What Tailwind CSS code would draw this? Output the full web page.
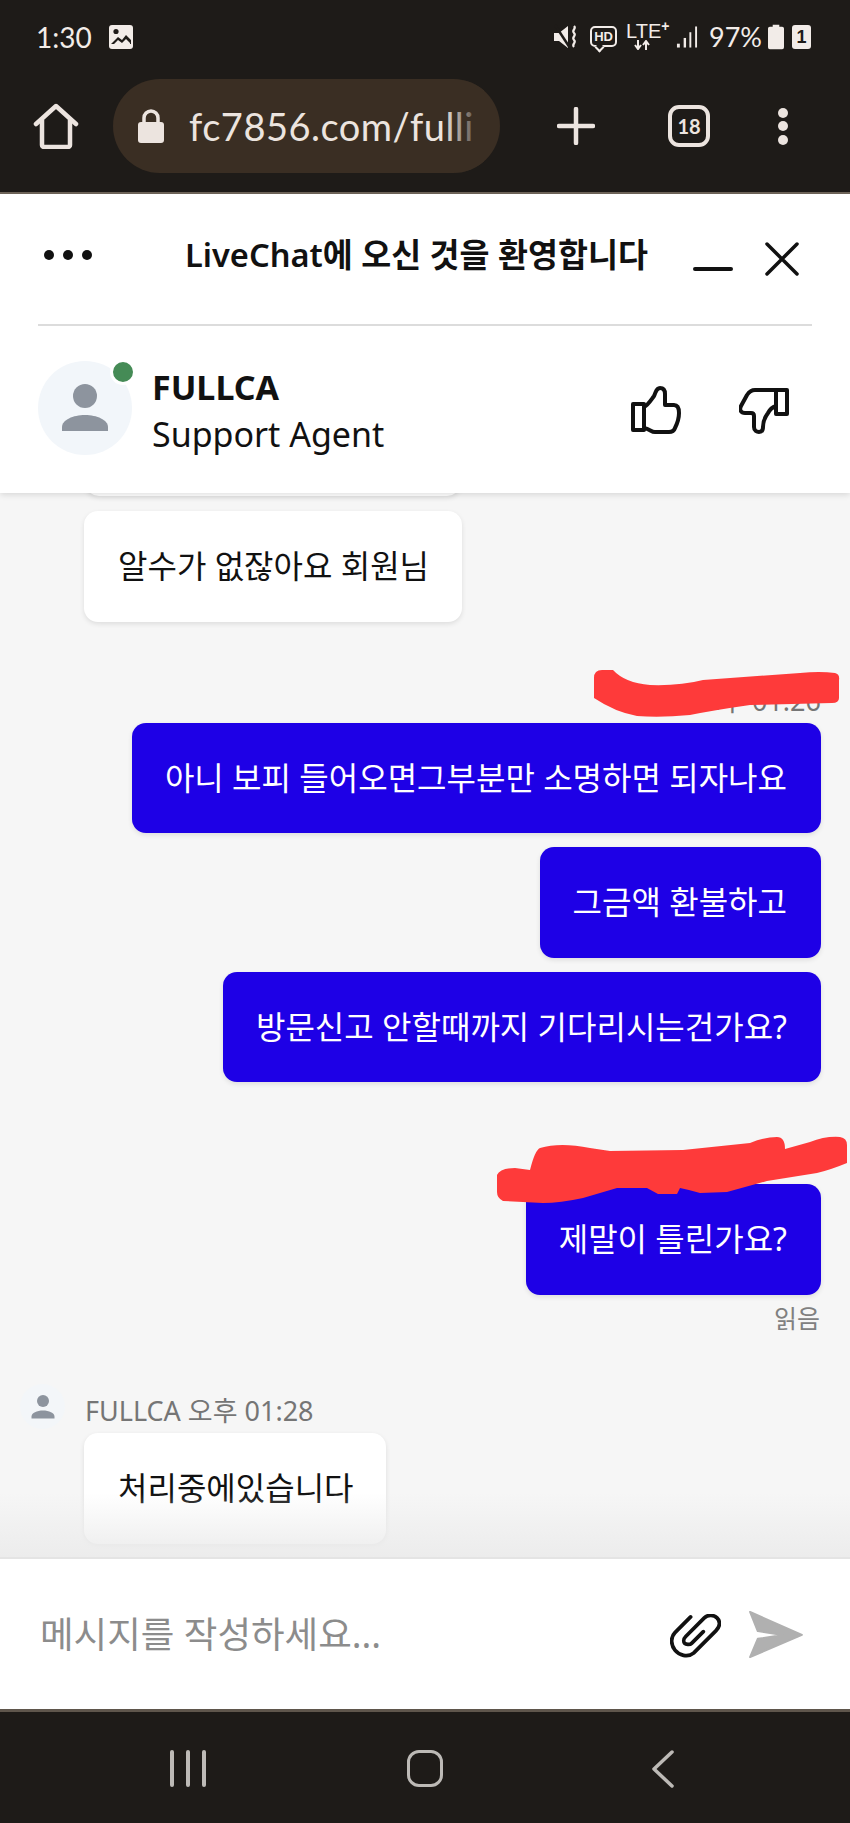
<!DOCTYPE html>
<html lang="ko">
<head>
<meta charset="UTF-8">
<title>LiveChat</title>
<script src="https://cdn.jsdelivr.net/npm/@tailwindcss/browser@4"></script>
</head>
<body class="m-0 bg-[#1e1b18]">
<div class="relative w-[850px] h-[1823px] overflow-hidden flex flex-col font-['Noto_Sans','Noto_Sans_CJK_KR',sans-serif]">

  <!-- browser chrome -->
  <div class="h-[194px] shrink-0 bg-[#1e1b18] border-b-2 border-[#6f655a] text-[#ece4df]">
    <div class="h-[76px] flex items-center pl-[36px] pr-[39px] pb-[3px]">
      <span class="text-[28px] leading-none font-['Lato',sans-serif] text-[#f2ece8] w-[72px]">1:30</span>
      <svg class="w-[26px] h-[26px]" viewBox="0 0 26 26"><rect x="1" y="1" width="24" height="24" rx="3" fill="#f2ece8"/><circle cx="8" cy="7.5" r="2.6" fill="#1e1b18"/><path d="M3 20l7-7 4 3 4-5 5 5v4H3z" fill="#1e1b18"/><path d="M4 22l6-6 4 3 4-4 4 4v3z" fill="#f2ece8"/></svg>
      <div class="ml-auto flex items-center text-[#f2ece8]">
        <svg class="w-[24px] h-[26px]" viewBox="0 0 24 26"><path d="M0 9h5l9-7v22l-9-7H0z" fill="#f2ece8"/><path d="M1 1l15 23" stroke="#1e1b18" stroke-width="2.5"/><path d="M20 2c3 3-3 4 0 7s-3 4 0 7-3 4 0 7" stroke="#f2ece8" stroke-width="2.2" fill="none"/></svg>
        <div class="relative ml-[12px] w-[27px] h-[21px] border-2 border-[#f2ece8] rounded-[5px] flex items-center justify-center"><span class="text-[13px] leading-none font-bold font-['Liberation_Sans',sans-serif]">HD</span><div class="absolute left-[4px] -bottom-[6px] w-[7px] h-[7px] border-l-2 border-b-2 border-[#f2ece8] -rotate-45 bg-[#1e1b18]"></div></div>
        <div class="ml-[9px] w-[41px] flex flex-col items-start -mt-[2px]">
          <span class="text-[20px] leading-[18px] font-['Liberation_Sans',sans-serif] whitespace-nowrap">LTE<sup class="text-[14px] leading-none font-bold">+</sup></span>
          <svg class="ml-[8px] w-[16px] h-[10px]" viewBox="0 0 16 10" fill="none" stroke="#f2ece8" stroke-width="2"><path d="M4 0v8M1 5l3 4 3-4M12 10V2M9 5l3-4 3 4"/></svg>
        </div>
        <svg class="ml-[9px] w-[22px] h-[24px]" viewBox="0 0 23 24"><g fill="#f2ece8"><rect x="1" y="19" width="3" height="4"/><rect x="8" y="13" width="2.5" height="10"/><rect x="14" y="7" width="2" height="16"/><rect x="20" y="1" width="2" height="22"/></g></svg>
        <span class="ml-[11px] text-[27px] leading-none font-['Lato',sans-serif]">97%</span>
        <svg class="ml-[6px] w-[16px] h-[26px]" viewBox="0 0 17 26"><path d="M5 0h7v2h3a2 2 0 012 2v20a2 2 0 01-2 2H2a2 2 0 01-2-2V4a2 2 0 012-2h3z" fill="#f2ece8"/></svg>
        <div class="ml-[8px] w-[19px] h-[24px] rounded-[3px] bg-[#f2ece8] flex items-center justify-center"><span class="text-[18px] leading-none font-bold text-[#1e1b18] font-['Liberation_Sans',sans-serif]">1</span></div>
      </div>
    </div>
    <div class="flex items-center h-[96px] pl-[33px] pr-[62px] mt-[2px]">
      <svg class="w-[46px] h-[46px]" viewBox="0 0 46 46" fill="none" stroke="#ece4df" stroke-width="4.5" stroke-linejoin="round" stroke-linecap="round"><path d="M3 21L23 3l20 18"/><path d="M9 17v25a2 2 0 002 2h24a2 2 0 002-2V17"/></svg>
      <div class="relative ml-[34px] w-[387px] h-[94px] rounded-full bg-[#3a2e23] flex items-center pl-[25px] overflow-hidden">
        <svg class="w-[26px] h-[34px] shrink-0" viewBox="0 0 26 34"><rect x="0" y="13" width="26" height="21" rx="3" fill="#ece4df"/><path d="M6 14V9a7 7 0 0114 0v5" fill="none" stroke="#ece4df" stroke-width="3.5"/></svg>
        <span class="ml-[25px] text-[38px] leading-none tracking-[0.5px] font-['Lato',sans-serif] whitespace-nowrap">fc7856.com/fulli</span>
        <div class="absolute right-[16px] top-0 bottom-0 w-[40px] bg-gradient-to-r from-[#3a2e23]/0 to-[#3a2e23]"></div>
      </div>
      <svg class="ml-[57px] w-[38px] h-[38px]" viewBox="0 0 38 38" stroke="#ece4df" stroke-width="4.5" stroke-linecap="round"><path d="M19 2v34M2 19h34"/></svg>
      <div class="ml-[73px] w-[42px] h-[42px] rounded-[11px] border-[4px] border-[#ece4df] flex items-center justify-center"><span class="text-[20px] leading-none font-['Lato',sans-serif] font-bold">18</span></div>
      <div class="ml-[68px] flex flex-col gap-[3.5px]">
        <div class="w-[10px] h-[10px] rounded-full bg-[#ece4df]"></div>
        <div class="w-[10px] h-[10px] rounded-full bg-[#ece4df]"></div>
        <div class="w-[10px] h-[10px] rounded-full bg-[#ece4df]"></div>
      </div>
    </div>
  </div>

  <!-- chat header -->
  <div class="relative z-10 h-[299px] shrink-0 bg-white shadow-[0_2px_6px_rgba(0,0,0,0.12)] px-[38px] text-[#111111]">
    <div class="h-[132px] flex items-center border-b-2 border-[#dcdcdc] pb-[8px]">
      <div class="flex gap-[9px] ml-[6px]">
        <div class="w-[10px] h-[10px] rounded-full bg-[#111111]"></div>
        <div class="w-[10px] h-[10px] rounded-full bg-[#111111]"></div>
        <div class="w-[10px] h-[10px] rounded-full bg-[#111111]"></div>
      </div>
      <h1 class="ml-[93px] text-[32.6px] leading-none font-semibold whitespace-nowrap">LiveChat에 오신 것을 환영합니다</h1>
      <div class="ml-auto mr-[13px] flex items-center">
        <div class="w-[40px] h-[4px] mt-[28px] rounded-full bg-[#111111]"></div>
        <svg class="ml-[32px] mt-[7px] w-[34px] h-[34px]" viewBox="0 0 34 34" stroke="#111111" stroke-width="3.5" stroke-linecap="round"><path d="M2 2l30 30M32 2L2 32"/></svg>
      </div>
    </div>
    <div class="flex items-start pt-[35px]">
      <div class="relative w-[94px] h-[94px] rounded-full bg-[#f2f6fa] flex items-center justify-center">
        <svg class="w-[48px] h-[48px]" viewBox="0 0 48 48" fill="#8d949e"><circle cx="24" cy="12" r="12"/><path d="M1 47v-4c0-7 11-12 23-12s23 5 23 12v4z"/></svg>
        <div class="absolute -top-[2px] -right-[4px] w-[26px] h-[26px] rounded-full bg-[#458b56] border-[3px] border-white"></div>
      </div>
      <div class="ml-[20px] mt-[3px] flex flex-col">
        <span class="text-[34px] leading-[47px] font-bold">FULLCA</span>
        <span class="text-[34px] leading-[47px]">Support Agent</span>
      </div>
      <div class="ml-auto mr-[23px] self-center flex items-center">
        <svg class="w-[50px] h-[48px]" viewBox="0 0 50 48" fill="none" stroke="#111111" stroke-width="4" stroke-linejoin="round" stroke-linecap="round"><path d="M2 18h11v26H2z"/><path d="M13 21C17 19 20 14 23 10C25 6 25 2 29 2C32 2 34 4 34 8V19H43C47 19 48 23 48 27C48 33 46 38 44 42C43 45 41 46 38 46H24C20 46 19 43 13 42"/></svg>
        <svg class="ml-[58px] w-[50px] h-[48px]" viewBox="0 0 50 48" fill="none" stroke="#111111" stroke-width="4" stroke-linejoin="round" stroke-linecap="round"><path d="M48 4H37v24h11z"/><path d="M37 4H16C12 4 10 6 8 9L2 20C0 24 2 27 6 27H12C14 27 15 28 15 30V41C15 45 18 46 20 46C23 46 24 44 24 41C24 36 26 31 29 27C31 23 34 21 37 20"/></svg>
      </div>
    </div>
  </div>

  <!-- messages -->
  <div class="relative flex-1 min-h-0 overflow-hidden bg-[#f6f6f6] text-[32px] leading-[46.5px]">
    <div class="flex flex-col">
      <div class="ml-[85px] w-[376px] h-[60px] -mt-[57px] rounded-[14px] bg-white shadow-[0_2px_5px_rgba(0,0,0,0.1)]"></div>

      <div class="self-start ml-[84px] mt-[15px] pl-[34px] pr-[33px] py-[32px] rounded-[14px] bg-white text-[#111111] shadow-[0_2px_5px_rgba(0,0,0,0.1)] whitespace-nowrap">알수가 없잖아요 회원님</div>

      <div class="self-end mr-[29px] mt-[63px] h-[38px] text-[27px] leading-[32px] text-[#757575]">오후 01:26</div>
      <div class="self-end mr-[29px] pl-[33px] pr-[34px] py-[32px] rounded-[14px] bg-[#1e00e6] text-white shadow-[0_2px_5px_rgba(0,0,0,0.1)] whitespace-nowrap">아니 보피 들어오면그부분만 소명하면 되자나요</div>
      <div class="self-end mr-[29px] mt-[14px] pl-[33px] pr-[34px] py-[32px] rounded-[14px] bg-[#1e00e6] text-white shadow-[0_2px_5px_rgba(0,0,0,0.1)] whitespace-nowrap">그금액 환불하고</div>
      <div class="self-end mr-[29px] mt-[14px] pl-[33px] pr-[34px] py-[32px] rounded-[14px] bg-[#1e00e6] text-white shadow-[0_2px_5px_rgba(0,0,0,0.1)] whitespace-nowrap">방문신고 안할때까지 기다리시는건가요?</div>

      <div class="self-end mr-[29px] mt-[64px] h-[38px] text-[27px] leading-[32px] text-[#757575]">오후 01:26</div>
      <div class="self-end mr-[29px] pl-[33px] pr-[34px] py-[32px] rounded-[14px] bg-[#1e00e6] text-white shadow-[0_2px_5px_rgba(0,0,0,0.1)] whitespace-nowrap">제말이 틀린가요?</div>
      <div class="self-end mr-[30px] mt-[6px] h-[34px] text-[25px] leading-[34px] text-[#808080]">읽음</div>

      <div class="flex items-center h-[49px] ml-[20px] mt-[49.5px]">
        <div class="w-[45px] h-[45px] rounded-full bg-[#f3f6f9] flex items-center justify-center self-start">
          <svg class="w-[24px] h-[24px]" viewBox="0 0 48 48" fill="#8d949e"><circle cx="24" cy="12" r="12"/><path d="M1 47v-4c0-7 11-12 23-12s23 5 23 12v4z"/></svg>
        </div>
        <span class="ml-[20px] text-[27px] leading-[38px] text-[#757575] mt-[4px]">FULLCA 오후 01:28</span>
      </div>
      <div class="self-start ml-[84px] pl-[34px] pr-[32px] py-[32px] rounded-[14px] bg-white text-[#111111] shadow-[0_2px_5px_rgba(0,0,0,0.1)] whitespace-nowrap">처리중에있습니다</div>
    </div>
    <div class="absolute left-0 right-0 bottom-0 h-[64px] bg-gradient-to-b from-[#ececec]/0 to-[#ececec] pointer-events-none"></div>
  </div>

  <!-- composer -->
  <div class="h-[152px] shrink-0 bg-white border-t-2 border-[#e4e4e4] flex items-center pl-[40px] pr-[47px]">
    <span class="text-[36.5px] leading-none text-[#8c8c8c]">메시지를 작성하세요...</span>
    <svg class="ml-auto mt-[4px] w-[51px] h-[45px]" viewBox="0 0 52 46" fill="none" stroke="#111111" stroke-width="3.8" stroke-linecap="round" stroke-linejoin="round"><path d="M21 3L5 19c-5 5-4 13 0 18s13 8 19 3L47 17c5-5 4-10 1-13s-9-4-13 0L16 23c-3 3-2 6-1 7s5 2 7 0l12-12"/></svg>
    <svg class="ml-[27px] w-[55px] h-[49px]" viewBox="0 0 57 51" fill="#b0b0b0" stroke="#b0b0b0" stroke-width="2" stroke-linejoin="round"><path d="M2 2l54 24L2 49l8-19 26-4-26-4z"/></svg>
  </div>

  <!-- android nav -->
  <div class="h-[114px] shrink-0 bg-[#1e1b18] border-t-[3px] border-[#5f564c] flex items-start pt-[38px] relative">
    <div class="ml-[170px] flex gap-[12.5px]">
      <div class="w-[3.5px] h-[37px] rounded-full bg-[#bdbab6]"></div>
      <div class="w-[3.5px] h-[37px] rounded-full bg-[#bdbab6]"></div>
      <div class="w-[3.5px] h-[37px] rounded-full bg-[#bdbab6]"></div>
    </div>
    <div class="ml-[201px] w-[36px] h-[37px] rounded-[12px] border-[3.5px] border-[#bdbab6]"></div>
    <svg class="ml-[209px] w-[22px] h-[38px]" viewBox="0 0 22 38" fill="none" stroke="#bdbab6" stroke-width="3.5" stroke-linecap="round" stroke-linejoin="round"><path d="M20 2L2 19l18 17"/></svg>
  </div>

  <!-- red scribbles drawn over the screenshot -->
  <svg class="absolute left-0 top-0 w-[850px] h-[1823px] z-20 pointer-events-none" viewBox="0 0 850 1823" fill="#fe3a3a">
    <path d="M594,678 Q594,670 602,670 L613,670 Q625,683 650,685 Q680,686 703,680 L800,673 Q820,671 835,673 Q840,674 839,680 L839,698 Q839,703 832,703 L750,705 Q715,710 690,715 Q660,718 637,716 Q615,712 594,698 Z"/>
    <path d="M497,1175 Q500,1168 515,1168 L530,1170 Q535,1150 540,1148 Q560,1142 590,1148 L610,1151 L683,1150 L750,1143 Q765,1137 777,1137 Q785,1137 785,1149 L810,1142 Q825,1136 840,1137 Q847,1138 847,1145 L847,1163 Q830,1170 817,1173 L767,1181 L727,1192 L700,1193 Q690,1190 680,1188 L677,1194 L658,1194 L647,1188 L617,1188 L583,1198 Q560,1203 543,1203 L503,1201 Q497,1198 497,1192 Z"/>
  </svg>
</div>
</body>
</html>
